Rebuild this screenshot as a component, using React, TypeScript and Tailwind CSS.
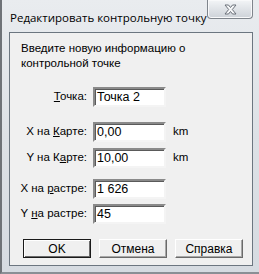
import React from 'react';

const font = { fontFamily: '"Liberation Sans", Arial, sans-serif' };

const Field: React.FC<{ label: React.ReactNode; value: string; unit?: string; className?: string }> = ({ label, value, unit, className }) => (
  <div className={`flex items-center h-[20px] ${className ?? ''}`}>
    <div className="w-[80px] pr-[3px] text-right whitespace-nowrap">{label}</div>
    <div className="ml-[3px] w-[73px] h-[20px] bg-white border-2 border-t-[#8a8a8a] border-l-[#8a8a8a] border-b-[#f4f4f4] border-r-[#f4f4f4] shadow-[inset_1px_1px_0_#5a5a5a] pl-[2px] flex items-center text-[12.5px] text-black">
      {value}
    </div>
    {unit && <div className="ml-[7px]">{unit}</div>}
  </div>
);

const Button: React.FC<{ children: React.ReactNode; primary?: boolean }> = ({ children, primary }) => (
  <button
    className={`w-[68px] h-[19px] bg-[#f0f0f0] flex items-center justify-center text-[12px] text-black ${
      primary
        ? 'border border-[#1a1a1a] shadow-[inset_1px_1px_0_#ffffff,inset_-1px_-1px_0_#6a6a6a]'
        : 'border border-t-white border-l-white border-b-[#6a6a6a] border-r-[#6a6a6a] shadow-[inset_-1px_-1px_0_#a8a8a8]'
    }`}
  >
    {children}
  </button>
);

export default function App() {
  return (
    <div className="w-[259px] h-[274px] overflow-hidden bg-white">
      <div className="w-[259px] h-[274px] flex flex-col bg-gradient-to-b from-[#e9ecef] via-[#dde1e6] to-[#d6dbe1] border-l-2 border-[#6f7378] border-b-2 border-b-[#8a8f95]">
        {/* title bar */}
        <div className="h-[32px] flex items-start shrink-0">
          <div
            className="pl-[8px] pt-[9px] text-[11.5px] text-black whitespace-nowrap flex-1 min-w-0"
            style={{ fontFamily: '"Open Sans", "Noto Sans", sans-serif' }}
          >
            Редактировать контрольную точку
          </div>
          <div className="shrink-0 mr-[6px] w-[46px] h-[19px] rounded-b-[4px] border border-t-0 border-[#7f858c] bg-gradient-to-b from-[#f3f5f7] to-[#cdd2d8] flex items-center justify-center shadow-[inset_0_0_0_1px_#f8f9fa]">
            <svg width="15" height="11" viewBox="0 0 15 11">
              <path
                d="M2 1 L5.5 1 L7.5 3.5 L9.5 1 L13 1 L9.3 5.5 L13 10 L9.5 10 L7.5 7.5 L5.5 10 L2 10 L5.7 5.5 Z"
                fill="#f7f8f9"
                stroke="#6a7079"
                strokeWidth="1"
              />
            </svg>
          </div>
        </div>

        {/* client area */}
        <div
          className="ml-[7px] mr-[6px] h-[234px] bg-[#f0f0f0] border border-[#6c7680] text-[11.5px] text-black flex flex-col"
          style={font}
        >
          <div className="pl-[11px] pt-[8px] leading-[15px]">
            Введите новую информацию о<br />контрольной точке
          </div>

          <Field className="mt-[16px]" label={<span><u>Т</u>очка:</span>} value="Точка 2" />
          <Field className="mt-[15px]" label={<span>X на <u>К</u>арте:</span>} value="0,00" unit="km" />
          <Field className="mt-[6px]" label={<span>Y на К<u>а</u>рте:</span>} value="10,00" unit="km" />
          <Field className="mt-[11px]" label={<span>X на <u>р</u>астре:</span>} value="1 626" />
          <Field className="mt-[5px]" label={<span>Y <u>н</u>а растре:</span>} value="45" />

          <div className="mt-[15px] pl-[13px] flex gap-[8px]">
            <Button primary>OK</Button>
            <Button>Отмена</Button>
            <Button>Справка</Button>
          </div>
        </div>
      </div>
    </div>
  );
}
